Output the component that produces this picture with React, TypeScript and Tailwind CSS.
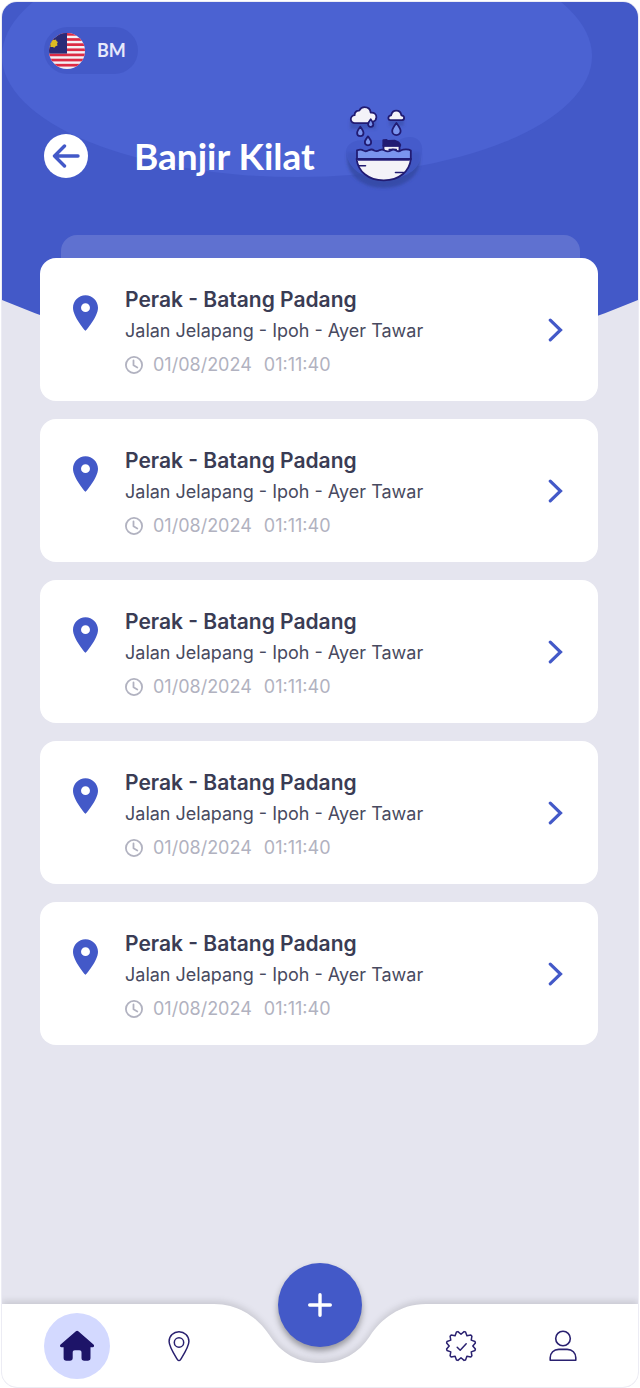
import { ReactNode } from 'react';

interface Alert {
  id: number;
  title: string;
  road: string;
  date: string;
  time: string;
}

const alerts: Alert[] = [1, 2, 3, 4, 5].map(id => ({
  id,
  title: 'Perak - Batang Padang',
  road: 'Jalan Jelapang - Ipoh - Ayer Tawar',
  date: '01/08/2024',
  time: '01:11:40',
}));

function MalaysiaFlag() {
  return (
    <svg className="size-9" viewBox="0 0 36 36" aria-hidden="true">
      <clipPath id="flag-clip"><circle cx="18" cy="18" r="18" /></clipPath>
      <g clipPath="url(#flag-clip)">
        <rect width="36" height="36" fill="#f4f1f6" />
        {[0, 1, 2, 3, 4, 5, 6].map(i => (
          <rect key={i} y={i * 5.14} width="36" height="2.7" fill="#dc2a45" />
        ))}
        <rect width="18" height="20.6" fill="#2a2b78" />
        <path d="M3.500 6.500l2 .6 1.600-.6.3 1.600 1.500 1-.8 1.500.4 2-1.900.6-1.200 1.600-1.800-.9-2.200.1.1-2.100-1-1.600 1.600-1.200z" fill="#dcbc22" />
      </g>
    </svg>
  );
}

function FloodIcon() {
  return (
    <svg className="h-[100px] w-20 shrink-0" viewBox="342 106 80 100" overflow="visible" aria-hidden="true">
      <defs>
        <filter id="soft" x="-30%" y="-30%" width="160%" height="160%"><feGaussianBlur stdDeviation="1.8" /></filter>
      </defs>
      <g filter="url(#soft)" fill="#33459f">
        <path d="M346 152h73v8c0 16-16 28-36.500 28S347 176 346 160z" opacity=".75" />
        <path d="M349 120h26v9h-26zM388 118h15v8h-15z" opacity=".5" />
      </g>
      <path d="M345 151c1-8 9-11 19-11h34c13-7 25-1 23 12-1 15-12 27-38 27s-37-14-38-28z" fill="#4359c8" opacity=".75" />
      <g stroke="#211b72" strokeWidth="1.800" strokeLinejoin="round" strokeLinecap="round">
        <path d="M354 123.200a4 4 0 0 1-.4-8c-.2-3 2-4.700 4.600-4.500 1.200-2.400 3-3.500 5.200-3.500 3.600 0 6 2.300 6.300 5.500 3.300-.6 5.900 1.500 5.700 4.600-.2 2.500-1.700 4-3.400 4.300-.5 1-1.500 1.600-3 1.600z" fill="#f3f2f8" />
        <path d="M389.500 120.200c-2.900-.2-2.900-4.500.6-4.800.6-2.800 2.500-4.700 5.200-4.700 2.800 0 4.600 1.700 5.100 4.600 3.600.4 3.500 4.700.6 4.900z" fill="#f3f2f8" />
        <path d="M369.700 119.300c1.600 2 2.600 3.400 2.600 4.900a2.600 2.600 0 0 1-5.200 0c0-1.500 1-2.900 2.600-4.900z" fill="#7b95ee" />
        <path d="M359.300 126.700c1.900 2.600 3.200 4.300 3.200 6.200a3.200 3.200 0 0 1-6.400 0c0-1.900 1.300-3.600 3.200-6.200z" fill="#7b95ee" />
        <path d="M367 136.400c1.900 2.500 3.200 4 3.200 5.700a3.200 3.200 0 0 1-6.400 0c0-1.700 1.300-3.200 3.200-5.700z" fill="#7b95ee" />
        <path d="M395.400 123c2.500 3.400 4.200 5.600 4.200 7.900a4.200 4.200 0 0 1-8.400 0c0-2.300 1.700-4.500 4.200-7.900z" fill="#7b95ee" />
        <path d="M382.500 145.500h16v6.500h-16z" fill="#f3f2f8" />
        <path d="M382.300 145.800v-5.600l3.200-.2 1 1 7-.4 4 1.800 1.700 2.200v1.200z" fill="#211b72" />
        <path d="M388 149.300h4M394 149.300h1.500" strokeWidth="1.200" />
        <path d="M356 150.300c3-1.200 4.800-1 6.500.3 2 1.300 3.800.6 5.500-.5 1.800-.9 3.600-.8 5.200.4 2 1.200 3.600.8 5.500-.4 1.900-.8 3.500-.6 5 .4 2.100 1.300 4 1.300 6 0 2-1.500 3.800-1.200 5.500 0 1.800 1.300 3.500.8 5-.3 2-.9 7.300-1.200 9.600.2v8.600H356z" fill="#7b95ee" />
        <path d="M355.600 159h54.300c-1.400 12.300-11.500 21.300-27.200 21.300-15.600 0-25.700-9-27.100-21.300z" fill="#f3f2f8" />
        <path d="M357 160.500h51.500" stroke="#5b559a" strokeWidth="1" />
        <path d="M358 165.800h6.500M394.500 172.500h8" strokeWidth="1.600" />
      </g>
    </svg>
  );
}

function AlertCard({ alert }: { alert: Alert }) {
  return (
    <li>
      <a href={`#alert-${alert.id}`} className="flex items-start rounded-2xl bg-white pt-7 pr-[35px] pb-[22px] pl-[33px]">
        <svg className="mt-[9px] h-9 w-[25px] shrink-0 text-[#4359c8]" viewBox="5 2 14 20" fill="currentColor" aria-hidden="true">
          <path d="M12 2C8.130 2 5 5.130 5 9c0 5.250 7 13 7 13s7-7.750 7-13c0-3.870-3.130-7-7-7zm0 9.500a2.500 2.500 0 1 1 0-5 2.500 2.500 0 0 1 0 5z" />
        </svg>
        <div className="ml-[27px] min-w-0 flex-1">
          <h2 className="text-[21px] leading-7 font-semibold text-[#3a3c54]">{alert.title}</h2>
          <p className="mt-[3px] text-[18px] leading-7 text-[#484a60]">{alert.road}</p>
          <p className="mt-1.5 flex items-center text-[18px] leading-7 text-[#b1b2c0]">
            <svg className="mr-2.5 size-[18px]" viewBox="0 0 18 18" fill="none" stroke="currentColor" strokeWidth="1.800" strokeLinecap="round" strokeLinejoin="round" aria-hidden="true">
              <circle cx="9" cy="9" r="8.100" />
              <path d="M8.500 4.500v4.800l3.800 2.200" />
            </svg>
            <span>{alert.date}</span>
            <span className="ml-3">{alert.time}</span>
          </p>
        </div>
        <svg className="mt-8 h-6 w-[15px] shrink-0 text-[#4359c8]" viewBox="0 0 15 24" fill="none" stroke="currentColor" strokeWidth="3.200" strokeLinecap="round" aria-hidden="true">
          <path d="M2.300 2.200L12.500 12 2.300 21.800" />
        </svg>
      </a>
    </li>
  );
}

function NavLink({ label, href, active, children }: { label: string; href: string; active?: boolean; children: ReactNode }) {
  return (
    <a
      href={href}
      aria-label={label}
      className={active
        ? 'flex size-[66px] items-center justify-center rounded-full bg-[#d3d9ff] text-[#1d1468]'
        : 'flex size-[66px] items-center justify-center rounded-full text-[#2a2170]'}
    >
      {children}
    </a>
  );
}

// seal outline: 12 blunt teeth, each a valley point followed by two tip points
const sealPoint = (r: number, deg: number) => {
  const a = (deg * Math.PI) / 180;
  return `${(16 + r * Math.sin(a)).toFixed(2)} ${(16 - r * Math.cos(a)).toFixed(2)}`;
};
const sealPath = 'M' + Array.from({ length: 12 }, (_, i) => [
  sealPoint(11.8, i * 30),
  sealPoint(14.7, i * 30 + 12),
  sealPoint(14.7, i * 30 + 18),
].join('L')).join('L') + 'Z';

function BottomNav() {
  return (
    <nav className="relative mt-auto flex h-[83px] items-center justify-between px-[42px]">
      <div className="absolute inset-0 flex drop-shadow-[0_-3px_3px_rgba(0,0,0,0.12)]">
        <div className="flex-1 bg-white" />
        <svg className="h-full w-[212px]" viewBox="0 0 212 83" aria-hidden="true">
          <path d="M0 0C26 0 45 15 56 32C67 49 84 59 106 59C128 59 145 49 156 32C167 15 186 0 212 0V83H0Z" fill="#fff" />
        </svg>
        <div className="flex-1 bg-white" />
      </div>

      <div className="relative flex gap-9">
        <NavLink label="Utama" href="#home" active>
          <svg className="h-8 w-9" viewBox="0 0 36 32" fill="currentColor" aria-hidden="true">
            <path d="M16.900 1.300a1.800 1.800 0 0 1 2.400 0L34.500 14.500c1.100 1 .6 2.700-.9 2.700H31.500V28c0 1.800-1 2.800-2.800 2.800h-3.400c-1.800 0-2.800-1-2.800-2.800v-5.500c0-1.400-.8-2.200-2.200-2.200h-4.400c-1.400 0-2.200.8-2.200 2.200V28c0 1.800-1 2.800-2.800 2.800H7.400C5.600 30.800 4.600 29.800 4.600 28V17.200H2.500c-1.500 0-2-1.700-.9-2.700z" />
          </svg>
        </NavLink>
        <NavLink label="Lokasi" href="#map">
          <svg className="h-8 w-[22px]" viewBox="0 0 22 32" fill="none" stroke="currentColor" strokeWidth="1.500" strokeLinejoin="round" aria-hidden="true">
            <path d="M11 1.700C5.500 1.700 1.100 6 1.100 11.500c0 5 4.900 12.500 8.400 18.200.8 1.200 2.200 1.200 3 0 3.500-5.700 8.400-13.200 8.400-18.200C20.900 6 16.500 1.700 11 1.700z" />
            <circle cx="11" cy="12.500" r="4.700" />
          </svg>
        </NavLink>
      </div>

      <button
        type="button"
        aria-label="Tambah"
        className="absolute bottom-10 left-1/2 flex size-[84px] -translate-x-1/2 items-center justify-center rounded-full bg-[#4359c8] shadow-[0_4px_6px_rgba(0,0,0,0.35)]"
      >
        <svg className="size-6" viewBox="0 0 24 24" stroke="#fff" strokeWidth="3.400" strokeLinecap="round" aria-hidden="true">
          <path d="M12 1.700v20.600M1.700 12h20.600" />
        </svg>
      </button>

      <div className="relative flex gap-9">
        <NavLink label="Pengesahan" href="#verified">
          <svg className="size-8" viewBox="0 0 32 32" fill="none" stroke="currentColor" strokeWidth="1.500" strokeLinejoin="round" strokeLinecap="round" aria-hidden="true">
            <path d={sealPath} />
            <path d="M12.200 17.200l3 3 6-6.500" />
          </svg>
        </NavLink>
        <NavLink label="Profil" href="#profile">
          <svg className="h-8 w-7" viewBox="0 0 28 32" fill="none" stroke="currentColor" strokeWidth="1.600" strokeLinejoin="round" aria-hidden="true">
            <circle cx="14" cy="8.500" r="7.300" />
            <path d="M1.200 30.200v-2.400c0-4.900 3.600-8.400 8.600-8.400h8.400c5 0 8.600 3.500 8.600 8.400v2.400z" />
          </svg>
        </NavLink>
      </div>
    </nav>
  );
}

export default function App() {
  return (
    <div className="min-h-screen bg-white px-px pt-px font-['Inter',sans-serif] flex flex-col">
      <div className="relative flex flex-1 flex-col overflow-hidden rounded-2xl border border-[#ececf4] bg-[#e5e5ef]">
        <svg className="absolute inset-x-0 top-0 h-[365px] w-full" viewBox="0 0 636 365" preserveAspectRatio="none" aria-hidden="true">
          <path d="M0 0H636V298Q318 432 0 298Z" fill="#4359c8" />
          <ellipse cx="295" cy="54" rx="295" ry="121" fill="#4b62d2" />
        </svg>

        <header className="relative pt-[25px] pl-[42px]">
          <button type="button" className="flex h-[47px] w-[94px] items-center gap-3 rounded-full bg-[#4359c8] pl-[5px] font-['Lato',sans-serif] text-[18px] font-bold text-[#e6e9fb]">
            <MalaysiaFlag />
            BM
          </button>
          <div className="mt-8 flex items-center">
            <button type="button" aria-label="Kembali" className="flex size-11 shrink-0 items-center justify-center rounded-full bg-white">
              <svg className="h-6 w-7" viewBox="0 0 28 24" fill="none" stroke="#4359c8" strokeWidth="3.400" strokeLinecap="round" strokeLinejoin="round" aria-hidden="true">
                <path d="M26 12H2.500M12.500 2L2.500 12l10 10" />
              </svg>
            </button>
            <h1 className="ml-[46px] font-['Lato',sans-serif] text-[37px] leading-[48px] font-bold text-white">Banjir Kilat</h1>
            <div className="ml-7"><FloodIcon /></div>
          </div>
        </header>

        <main className="relative mt-[29px] mb-10 pr-10 pl-[38px]">
          <div className="mr-[18px] ml-[21px] h-[23px] rounded-t-2xl bg-white/15" />
          <ul className="flex flex-col gap-[18px]">
            {alerts.map(a => <AlertCard key={a.id} alert={a} />)}
          </ul>
        </main>

        <BottomNav />
      </div>
    </div>
  );
}
